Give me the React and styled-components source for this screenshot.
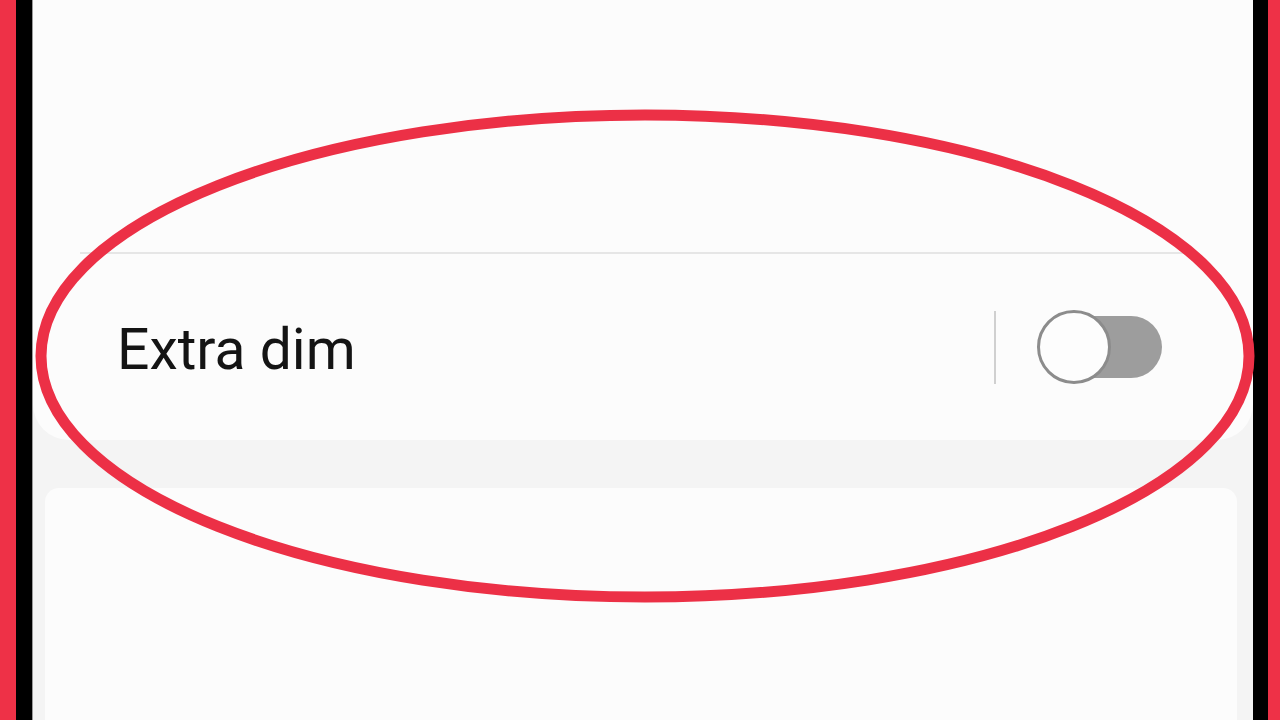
import React from "react";
import styled, { createGlobalStyle } from "styled-components";

const GlobalStyle = createGlobalStyle`
  html, body {
    margin: 0;
    padding: 0;
    width: 1280px;
    height: 720px;
    overflow: hidden;
    font-family: Roboto, "Noto Sans", sans-serif;
  }
`;

const Frame = styled.div`
  position: relative;
  display: flex;
  width: 1280px;
  height: 720px;
  overflow: hidden;
  background: #000;
`;

const Edge = styled.div`
  flex: 0 0 ${(p) => p.$w}px;
  background: ${(p) => p.$color};
`;

const Screen = styled.div`
  flex: 1 1 auto;
  display: flex;
  flex-direction: column;
  background: #f4f4f4;
`;

const TopCard = styled.div`
  display: flex;
  flex-direction: column;
  height: 440px;
  background: #fcfcfc;
  border-radius: 0 0 36px 36px;
`;

const TopArea = styled.div`
  height: 252px;
`;

const Divider = styled.div`
  height: 2px;
  margin: 0 68px 0 47px;
  background: #e6e6e6;
`;

const Row = styled.div`
  flex: 1;
  display: flex;
  align-items: center;
  padding: 0 91px 0 84px;
`;

const Label = styled.span`
  flex: 1;
  font-size: 57px;
  color: #141414;
  margin-top: 4px;
`;

const VSep = styled.div`
  width: 2px;
  height: 73px;
  background: #d0d0d0;
  margin-right: 41px;
`;

const Switch = styled.div`
  position: relative;
  width: 125px;
  height: 74px;
`;

const Track = styled.div`
  position: absolute;
  left: 3px;
  right: 0;
  top: 6px;
  bottom: 6px;
  border-radius: 31px;
  background: #9d9d9d;
`;

const Thumb = styled.div`
  position: absolute;
  left: 0;
  top: 0;
  width: 68px;
  height: 68px;
  border-radius: 50%;
  border: 3px solid #8c8c8c;
  background: #fdfdfd;
`;

const Gap = styled.div`
  height: 48px;
`;

const BottomCard = styled.div`
  flex: 1;
  margin: 0 16px 0 12px;
  background: #fcfcfc;
  border-radius: 14px 14px 0 0;
`;

const Ellipse = styled.svg`
  position: absolute;
  left: 0;
  top: 0;
  pointer-events: none;
`;

export default function App() {
  return (
    <>
      <GlobalStyle />
      <Frame>
        <Edge $w={16} $color="#ee3147" />
        <Edge $w={16} $color="#000" />
        <Edge $w={1} $color="#9a9a9a" />
        <Screen>
          <TopCard>
            <TopArea />
            <Divider />
            <Row>
              <Label>Extra dim</Label>
              <VSep />
              <Switch>
                <Track />
                <Thumb />
              </Switch>
            </Row>
          </TopCard>
          <Gap />
          <BottomCard />
        </Screen>
        <Edge $w={15} $color="#000" />
        <Edge $w={12} $color="#ee3147" />
        <Ellipse width="1280" height="720" viewBox="0 0 1280 720">
          <ellipse
            cx="645"
            cy="356"
            rx="604"
            ry="241"
            fill="none"
            stroke="#ec3046"
            strokeWidth="11"
          />
        </Ellipse>
      </Frame>
    </>
  );
}
